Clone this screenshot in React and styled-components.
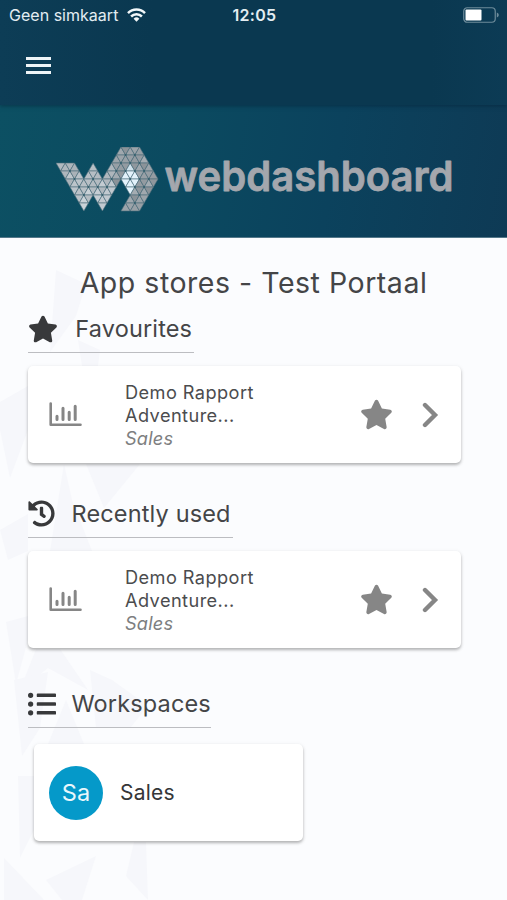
import React from "react";
import styled, { createGlobalStyle } from "styled-components";
import { FaStar, FaHistory, FaListUl } from "react-icons/fa";

const GlobalStyle = createGlobalStyle`
    * {
        box-sizing: border-box;
    }

    body {
        margin: 0;
        background: #fbfcfe;
        font-family: Inter, "Liberation Sans", sans-serif;
        color: #444547;
    }
`;

const Page = styled.div`
    position: relative;
    width: 507px;
    height: 900px;
    overflow: hidden;
    background: #fbfcfe;
`;

const Header = styled.header`
    position: relative;
    z-index: 1;
    height: 105px;
    background: linear-gradient(90deg, #0d3d56 0%, #0a3850 30%, #0a3850 85%, #0c3b55 100%);
    box-shadow: 0 1px 4px rgba(4, 32, 52, 0.55);
`;

const StatusBar = styled.div`
    display: grid;
    grid-template-columns: 1fr auto 1fr;
    align-items: center;
    height: 30px;
    padding: 0 7px 0 9px;
    color: #e3edf2;
    font-size: 16px;

    .carrier {
        display: flex;
        align-items: center;
        gap: 9px;
        letter-spacing: 0.02px;
        white-space: nowrap;
    }

    .time {
        font-weight: 600;
        letter-spacing: 0.3px;
    }

    .battery {
        justify-self: end;
    }

    svg {
        display: block;
    }
`;

const MenuButton = styled.button`
    display: flex;
    flex-direction: column;
    justify-content: space-between;
    width: 25px;
    height: 17px;
    margin: 27px 0 0 26px;
    padding: 0;
    border: none;
    background: none;

    span {
        height: 3px;
        background: #eef4f7;
    }
`;

const Banner = styled.div`
    position: relative;
    display: flex;
    align-items: flex-start;
    height: 133px;
    padding: 42px 0 0 56px;
    background: linear-gradient(100deg, #0c5063 0%, #0b4a60 35%, #0b425d 65%, #0e3a55 100%);
    border-bottom: 1px solid #54788a;
`;

const Wordmark = styled.svg`
    margin-left: 7px;
    overflow: visible;

    text {
        font-family: Inter, sans-serif;
        font-size: 41.5px;
        font-weight: 600;
        fill: #a4a7ad;
        stroke: #a4a7ad;
        stroke-width: 0.8px;
        stroke-linejoin: round;
    }
`;

const Shards = styled.svg`
    position: absolute;
    left: 0;
    top: 238px;
    fill: #f6f7fb;
`;

const Content = styled.main`
    position: relative;
    padding: 0 28px;
`;

const Title = styled.h1`
    margin: 0;
    padding-top: 28px;
    height: 74px;
    font-size: 28.5px;
    font-weight: 400;
    line-height: 34px;
    letter-spacing: 0.52px;
    text-align: center;
    white-space: nowrap;
`;

const SectionTitle = styled.h2`
    display: flex;
    align-items: center;
    width: ${(props) => props.$width}px;
    height: 41px;
    margin: 0 0 ${(props) => props.$gap || 13}px;
    padding-bottom: 7px;
    border-bottom: 1px solid #bcbdc1;
    font-size: 23.5px;
    font-weight: 400;
    letter-spacing: 0.15px;
    white-space: nowrap;

    .icon {
        display: flex;
        flex: none;
        width: ${(props) => props.$iconBox || 43.5}px;
        color: #38393b;
    }
`;

const Card = styled.div`
    display: flex;
    align-items: center;
    width: 433px;
    height: 97px;
    margin-bottom: ${(props) => props.$after}px;
    padding: 0 22px 0 21px;
    border-radius: 5px;
    background: #fff;
    color: #868686;
    box-shadow: 0 2px 3px rgba(0, 0, 0, 0.26), 0 1px 5px rgba(0, 0, 0, 0.07);

    svg {
        display: block;
        flex: none;
    }

    .star {
        margin-right: 29px;
    }
`;

const CardText = styled.div`
    flex: 1;
    margin: 1px 0 0 43px;
    font-size: 18.2px;
    line-height: 23px;
    letter-spacing: 0.42px;
    color: #4b4c4e;

    em {
        display: block;
        letter-spacing: 0.2px;
        color: #7d7e80;
    }
`;

const WorkspaceCard = styled(Card)`
    width: 269px;
    margin-left: 6px;
    padding: 0 15px;
`;

const Avatar = styled.div`
    display: flex;
    align-items: center;
    justify-content: center;
    width: 54px;
    height: 54px;
    margin-right: 17px;
    border-radius: 50%;
    background: #0599c9;
    color: #e9f7fc;
    font-size: 23.5px;
`;

const WorkspaceName = styled.div`
    font-size: 21px;
    letter-spacing: 0.2px;
    color: #353638;
`;

// Outline of the mark on a triangular lattice: [half sides, rows]
const OUTLINE = [
  [0, 2], [4, 2], [6, 4], [8, 2], [10, 4], [14, 0], [18, 0], [22, 4],
  [18, 8], [14, 8], [16, 6], [14, 4], [10, 8], [8, 6], [6, 8],
];
const HALF = 4.64;
const ROW = 8;

const isInside = (x, y) => {
  let inside = false;
  for (let i = 0, j = OUTLINE.length - 1; i < OUTLINE.length; j = i++) {
    const [xi, yi] = OUTLINE[i];
    const [xj, yj] = OUTLINE[j];
    if (yi > y !== yj > y && x < ((xj - xi) * (y - yi)) / (yj - yi) + xi) {
      inside = !inside;
    }
  }
  return inside;
};

const shade = (col, row, up) => {
  if (Math.abs(col - 16) + Math.abs(row + 0.5 - 4) < 2.2 && col < 18) {
    return row < 3 ? "#d0e2ec" : "#e2f2fb";
  }
  const jitter = ((col * 7 + row * 11) % 5) * 4 + (up ? 9 : 0);
  const base = col > 12 ? 139 : 151 + row * 5;
  const v = Math.min(base + jitter, 214);
  return `rgb(${v}, ${v + 8}, ${v + 14})`;
};

const triangles = [];
for (let row = 0; row < 8; row++) {
  for (let col = 1; col < 22; col++) {
    const up = (col + row) % 2 === 0;
    if (!isInside(col, row + (up ? 0.66 : 0.34))) continue;
    const tip = up ? row : row + 1;
    const base = up ? row + 1 : row;
    triangles.push({
      key: `${col}-${row}`,
      fill: shade(col, row, up),
      points: [
        [col * HALF, tip * ROW],
        [(col - 1) * HALF, base * ROW],
        [(col + 1) * HALF, base * ROW],
      ].join(" "),
    });
  }
}

// Dark joints where six triangles meet
const joints = [];
for (let row = 1; row < 8; row++) {
  for (let col = 1; col < 22; col++) {
    if ((col + row) % 2 !== 0) continue;
    if (isInside(col - 0.9, row + 0.01) && isInside(col + 0.9, row + 0.01) && isInside(col, row - 0.5) && isInside(col, row + 0.5)) {
      joints.push([col * HALF, row * ROW]);
    }
  }
}

function LogoMark() {
  return (
    <svg width="103" height="65" viewBox="0 0 103 65">
      {triangles.map(({ key, points, fill }) => (
        <polygon
          key={key}
          points={points}
          fill={fill}
          stroke="#4a6b79"
          strokeWidth="0.6"
        />
      ))}
      {joints.map(([x, y]) => (
        <circle key={`${x}-${y}`} cx={x} cy={y} r="1.1" fill="#36616f" />
      ))}
    </svg>
  );
}

function WifiIcon() {
  return (
    <svg width="19" height="14" viewBox="0 0 19 14" fill="none" stroke="#f3f8fa" strokeWidth="2.5">
      <path d="M1 5.1a12 12 0 0 1 17 0" />
      <path d="M4.1 8.5a7.6 7.6 0 0 1 10.8 0" />
      <path d="M9.500 13.700 6.600 10.700a4.100 4.100 0 0 1 5.800 0z" fill="#f3f8fa" stroke="none" />
    </svg>
  );
}

function BatteryIcon() {
  return (
    <svg className="battery" width="37" height="16" viewBox="0 0 37 16">
      <rect x="0.75" y="0.75" width="31.5" height="14.5" rx="3.5" fill="none" stroke="#6e8c9b" strokeWidth="1.2" />
      <rect x="2.5" y="2.5" width="16" height="11" rx="1" fill="#fff" />
      <path d="M33.8 5.500c2.600.700 2.600 4.300 0 5z" fill="#6e8c9b" />
    </svg>
  );
}

function ChartIcon() {
  return (
    <svg width="33" height="25" viewBox="0 0 33 25" fill="none" stroke="#868686" strokeLinecap="round">
      <path d="M1.700 1.500V22.800H31.500" strokeWidth="2.6" strokeLinejoin="round" />
      <path d="M8 14.300V17.500M14 6.300V17.500M20.200 10.300V17.500M26.200 4.300V17.500" strokeWidth="3" />
    </svg>
  );
}

function ChevronIcon() {
  return (
    <svg width="17" height="26" viewBox="0 0 17 26" fill="none" stroke="#868686" strokeWidth="4.4">
      <path d="M3 3 13 13 3 23" strokeLinecap="round" strokeLinejoin="miter" />
    </svg>
  );
}

function ReportCard({ after }) {
  return (
    <Card $after={after}>
      <ChartIcon />
      <CardText>
        Demo Rapport
        <br />
        Adventure...
        <em>Sales</em>
      </CardText>
      <FaStar className="star" style={{ width: 33, height: 31 }} />
      <ChevronIcon />
    </Card>
  );
}

export default function App() {
  return (
    <Page>
      <GlobalStyle />
      <Header>
        <StatusBar>
          <div className="carrier">
            Geen simkaart
            <WifiIcon />
          </div>
          <div className="time">12:05</div>
          <BatteryIcon />
        </StatusBar>
        <MenuButton aria-label="Menu">
          <span />
          <span />
          <span />
        </MenuButton>
      </Header>
      <Banner>
        <LogoMark />
        <Wordmark width="287" height="60">
          <text x="-1.500" y="43.800" textLength="289" lengthAdjust="spacingAndGlyphs">
            webdashboard
          </text>
        </Wordmark>
      </Banner>
      <Shards width="220" height="662" viewBox="0 238 220 662">
        <path d="M56 270 86 284 76 316 50 352z" />
        <path d="M78 340 100 350 98 366H82z" />
        <path d="M0 402 28 386V430L10 478 0 430z" />
        <path d="M86 464H140L104 508z" />
        <path d="M64 464 72 500 92 551H50z" />
        <path d="M0 530 28 514V551L8 560z" />
        <path d="M6 622 28 616V640L16 684z" />
        <path d="M36 649H60L88 690 48 668 20 690z" />
        <path d="M90 670 112 680 148 706 130 728H96z" />
        <path d="M14 680 48 672 40 728 22 756z" />
        <path d="M66 700 84 744H48z" />
        <path d="M18 776H34V830L20 858z" />
        <path d="M4 858 44 900H4z" />
        <path d="M46 880 96 856 82 900H62z" />
        <path d="M134 842H146L148 900 126 876z" />
      </Shards>
      <Content>
        <Title>App stores - Test Portaal</Title>
        <SectionTitle $width={166} $iconBox={47.3}>
          <span className="icon">
            <FaStar style={{ width: 30, height: 28 }} />
          </span>
          Favourites
        </SectionTitle>
        <ReportCard after={34} />
        <SectionTitle $width={205}>
          <span className="icon">
            <FaHistory size={27} />
          </span>
          Recently used
        </SectionTitle>
        <ReportCard after={39} />
        <SectionTitle $width={183} $gap={16}>
          <span className="icon">
            <FaListUl size={28} />
          </span>
          Workspaces
        </SectionTitle>
        <WorkspaceCard>
          <Avatar>Sa</Avatar>
          <WorkspaceName>Sales</WorkspaceName>
        </WorkspaceCard>
      </Content>
    </Page>
  );
}
